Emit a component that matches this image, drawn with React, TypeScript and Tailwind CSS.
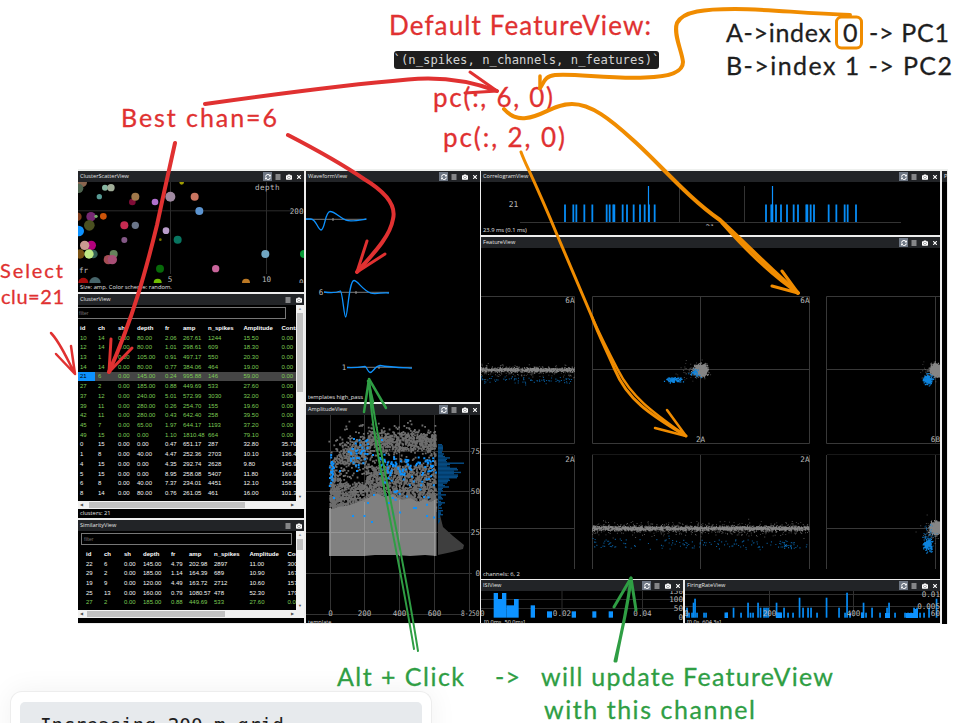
import React from "react";
import { FaSyncAlt, FaCamera, FaTimes } from "react-icons/fa";

const BLUE = "#0d92ff";
const MONO = '"DejaVu Sans Mono", monospace';

function makeRandom(seed: number) {
  let s = seed;
  return () => {
    s = (s * 16807) % 2147483647;
    return s / 2147483647;
  };
}

function dots(list: number[][], size: number) {
  return list
    .map(([x, y]) => `M${(x - size / 2).toFixed(1)} ${(y - size / 2).toFixed(1)}h${size}v${size}h-${size}z`)
    .join("");
}

// Gaussian-like cloud around a centre
function cloud(seed: number, n: number, cx: number, cy: number, sx: number, sy: number) {
  const r = makeRandom(seed);
  const g = () => r() + r() + r() + r() - 2;
  return Array.from({ length: n }, () => [cx + g() * sx, cy + g() * sy]);
}

// Horizontal band of points
function band(seed: number, n: number, x0: number, x1: number, cy: number, sy: number) {
  const r = makeRandom(seed);
  return Array.from({ length: n }, () => [x0 + r() * (x1 - x0), cy + (r() + r() + r() + r() - 2) * sy]);
}

function MenuIcon() {
  return (
    <svg width="6" height="6" viewBox="0 0 6 6" stroke="#fff" strokeWidth="0.9">
      <path d="M0.500 1H5.500M0.500 3H5.500M0.500 5H5.500" />
    </svg>
  );
}

function Bar({ title, full = true, icons = true }: { title: string; full?: boolean; icons?: boolean }) {
  return (
    <div className="flex h-[11px] shrink-0 items-center justify-between overflow-hidden bg-[#222427] pl-[2px] text-white">
      <span className="whitespace-nowrap pt-px text-[5.6px] leading-none text-[#e4e4e4]">{title}</span>
      {icons && (
        <div className="flex items-center">
          {full && (
            <span className="flex h-[9px] w-[9px] items-center justify-center bg-[#6d7683]">
              <FaSyncAlt size={6} />
            </span>
          )}
          <span className="flex w-[12px] justify-center">
            <MenuIcon />
          </span>
          <span className="flex w-[10px] justify-center">
            <FaCamera size={6} />
          </span>
          {full && (
            <span className="flex w-[10px] justify-center">
              <FaTimes size={6} />
            </span>
          )}
        </div>
      )}
    </div>
  );
}

function Plot({ x, y, w, h, children }: { x: number; y: number; w: number; h: number; children: React.ReactNode }) {
  return (
    <svg className="block shrink-0 bg-black" width={w} height={h} viewBox={`${x} ${y} ${w} ${h}`}>
      {children}
    </svg>
  );
}

function Label({ x, y, anchor = "middle", size = 7.6, children }: { x: number; y: number; anchor?: "start" | "middle" | "end"; size?: number; children: string }) {
  return (
    <text x={x} y={y} textAnchor={anchor} fontSize={size} fontFamily={MONO} fill="#b9b9b9">
      {children}
    </text>
  );
}

const circles: [number, number, number, string][] = [
  [36, 52, 15, "#8a6650"], [26, 70, 14, "#4f6550"], [105, 68, 9, "#86b5a0"], [123, 68, 11, "#a1ad98"], [88, 95, 8, "#579a94"],
  [187, 111, 10, "#800c37"], [196, 95, 12, "#a0784a"], [255, 111, 10, "#b070cc"], [301, 95, 15, "#a08aa2"],
  [335, 52, 7, "#a09c00"], [374, 95, 12, "#c97560"], [388, 138, 12, "#5c94d0"], [22, 155, 13, "#7e3c1c"],
  [63, 155, 14, "#752873"], [78, 154, 5, "#77b36a"], [100, 154, 10, "#cc5409"], [58, 181, 16, "#4a5020"],
  [26, 198, 16, "#0d92ff"], [163, 181, 12, "#c72b51"], [196, 181, 11, "#6a7588"], [288, 197, 10, "#b99dca"],
  [163, 225, 9, "#845886"], [271, 224, 4, "#7c7a00"], [323, 224, 12, "#087560"], [64, 241, 14, "#b3007c"],
  [44, 241, 14, "#ca9a91"], [30, 267, 14, "#765012"], [70, 267, 13, "#356056"], [57, 267, 14, "#bee885"],
  [131, 267, 12, "#65825b"], [115, 284, 14, "#a44d53"], [127, 284, 14, "#a84e76"], [586, 267, 12, "#71a6c2"],
  [702, 267, 12, "#079b36"], [270, 311, 12, "#076909"], [437, 311, 11, "#c9659b"], [40, 353, 15, "#a40c0c"],
  [75, 353, 17, "#47656a"], [263, 353, 12, "#70be00"], [528, 353, 12, "#bb7824"],
];

function ClusterScatter() {
  return (
    <Plot x={78} y={182} w={226} h={101}>
      <path d="M170.500 182V274M266.500 182V274M78 210.800H292" stroke="#2c2c2c" />
      {circles.map(([x, y, r, c], i) => (
        <circle key={i} cx={x / 3 + 70} cy={y / 3 + 165} r={r / 3} fill={c} />
      ))}
      <text x="255" y="189.500" textLength="24.500" fontSize="7.600" fontFamily={MONO} fill="#b9b9b9">depth</text>
      <Label x={303.5} y={213.5} anchor="end">200</Label>
      <Label x={79} y={273} anchor="start">fr</Label>
      <Label x={170} y={281.5}>5</Label>
      <Label x={266.5} y={281.5}>10</Label>
      <Label x={303.5} y={285} anchor="end">0</Label>
    </Plot>
  );
}

const headers = ["id", "ch", "sh", "depth", "fr", "amp", "n_spikes", "Amplitude", "Conta"];
const clusterRows = [
  "10 14 0.00 80.00 2.06 267.61 1244 15.50 0.00", "12 14 0.00 80.00 1.01 298.61 609 18.30 0.00",
  "13 1 0.00 105.00 0.91 497.17 550 20.30 0.00", "14 14 0.00 80.00 0.77 384.06 464 19.00 0.00",
  "21 6 0.00 145.00 0.24 995.88 146 59.00 0.00", "27 2 0.00 185.00 0.88 449.69 533 27.60 0.00",
  "37 12 0.00 240.00 5.01 572.99 3030 32.00 0.00", "39 11 0.00 280.00 0.26 254.70 155 19.60 0.00",
  "42 11 0.00 280.00 0.43 642.40 258 39.50 0.00", "45 7 0.00 65.00 1.97 644.17 1193 37.20 0.00",
  "49 15 0.00 0.00 1.10 1810.48 664 79.10 0.00", "0 15 0.00 0.00 0.47 651.17 287 32.80 35.70",
  "1 8 0.00 40.00 4.47 252.36 2703 10.10 136.40", "4 15 0.00 0.00 4.35 292.74 2628 9.80 145.90",
  "5 15 0.00 0.00 8.95 258.08 5407 11.80 169.90", "6 8 0.00 40.00 7.37 234.01 4451 12.10 158.50",
  "8 14 0.00 80.00 0.76 261.05 461 16.00 101.30",
].map((r) => r.split(" "));
const similarRows = [
  "22 6 0.00 145.00 4.79 202.98 2897 11.00 300.00", "29 2 0.00 185.00 1.14 164.39 689 10.90 167.00",
  "19 9 0.00 120.00 4.49 163.72 2712 10.60 157.00", "25 13 0.00 160.00 0.79 1080.57 478 52.30 179.00",
  "27 2 0.00 185.00 0.88 449.69 533 27.60 0.00",
].map((r) => r.split(" "));

const GRID = "grid grid-cols-[20px_20px_19px_28px_18px_25px_35.5px_38px_40px] items-center";

function Row({ cells, tone, active = false }: { cells: string[]; tone: string; active?: boolean }) {
  return (
    <div className={`${GRID} h-[9.72px] ${tone} ${active ? "bg-[#454545]" : ""}`}>
      {cells.map((c, i) => (
        <span key={i} className={`flex h-full items-center whitespace-nowrap ${i === 0 ? "mr-[3px] pl-[2px]" : ""} ${active && i === 0 ? "bg-[#0d92ff] text-black" : ""}`}>
          {c}
        </span>
      ))}
    </div>
  );
}

function VScroll({ thumb }: { thumb: string }) {
  return (
    <div className="flex w-[8px] shrink-0 flex-col items-center justify-between bg-[#f1f1f1]">
      <div className="flex flex-col items-center">
        <span className="flex h-[8px] items-center text-[4px] text-[#999]">▲</span>
        <div className={`w-[6px] bg-[#c1c1c1] ${thumb}`} />
      </div>
      <span className="flex h-[8px] items-center text-[4px] text-[#505050]">▼</span>
    </div>
  );
}

function HScroll({ thumb }: { thumb: string }) {
  return (
    <div className="flex h-[8px] shrink-0 bg-[#f1f1f1]">
      <div className="flex w-[218px] items-center justify-between px-[2px]">
        <div className="flex items-center">
          <span className="flex w-[7px] text-[4px] leading-none text-[#505050]">◀</span>
          <div className={`h-[6px] bg-[#c1c1c1] ${thumb}`} />
        </div>
        <span className="text-[4px] leading-none text-[#505050]">▶</span>
      </div>
    </div>
  );
}

function Status({ children, h = "h-[9px]" }: { children?: string; h?: string }) {
  return <div className={`flex shrink-0 items-center overflow-hidden whitespace-nowrap bg-black pl-[2px] text-[5.8px] leading-none text-[#e2e2e2] ${h}`}>{children}</div>;
}

function TableView() {
  return (
    <div className="flex h-[224px] shrink-0 flex-col bg-black">
      <Bar title="ClusterView" full={false} />
      <div className="flex h-[196px]">
        <div className="w-[218px] overflow-hidden font-['Liberation_Sans',Arial,sans-serif] text-[6px] leading-none">
          <div className="mt-[2px] flex h-[12px] w-[208px] items-center border border-l-0 border-[#777] pl-px text-[5px] text-[#757575]">filter</div>
          <div className="mt-[4px] font-bold"><Row cells={headers} tone="text-white" /></div>
          {clusterRows.map((r, i) => (
            <Row key={i} cells={r} tone={i < 11 ? "text-[#7dcb54]" : "text-[#f4f4f4]"} active={r[0] === "21"} />
          ))}
        </div>
        <VScroll thumb="h-[79px]" />
      </div>
      <HScroll thumb="w-[156px] ml-[2px]" />
      <Status>clusters: 21</Status>
    </div>
  );
}

function SimilarityTable() {
  return (
    <div className="flex h-[103px] shrink-0 flex-col bg-black">
      <Bar title="SimilarityView" full={false} />
      <div className="flex h-[79px]">
        <div className="w-[218px] overflow-hidden font-['Liberation_Sans',Arial,sans-serif] text-[6px] leading-none">
          <div className="ml-[3px] mt-[2px] flex h-[12px] w-[211px] items-center border border-[#777] pl-[2px] text-[5px] text-[#757575]">filter</div>
          <div className="ml-[6px] mt-[4px] font-bold"><Row cells={headers} tone="text-white" /></div>
          <div className="ml-[6px]">
            {similarRows.map((r, i) => (
              <Row key={i} cells={r} tone={i < 4 ? "text-[#f4f4f4]" : "text-[#7dcb54]"} />
            ))}
          </div>
        </div>
        <VScroll thumb="h-[11px]" />
      </div>
      <HScroll thumb="w-[138px]" />
      <Status h="h-[5px]" />
    </div>
  );
}

function Waveforms() {
  return (
    <Plot x={306} y={182} w={174} h={211}>
      <path d="M306 219.300H366M324 292.300H389M347 367.300H412" stroke="#777" />
      <path d="M333 218v3M356 291v3M379 366v3" stroke="#999" />
      <g fill="none" stroke={BLUE} strokeWidth="1.300" strokeLinejoin="round">
        <path d="M306 219H311C316 219 318 230 321 230C325 230 325 211.500 330 211.500C335 211.500 340 218 346 220.200C351 222 360 220 366.500 219" />
        <path d="M324 292C331 293 338 292 340.500 291C342.500 292 344 317 345.700 317C347.500 317 349 280.500 354 280.500C358 280.500 362 290 371 293.200C377 294.500 383 292 389 293" />
        <path d="M347 367.500C354 368 361 367 365 366.300C367 367 368 372.500 370 372.500C373 372.500 375 366 380 365.500C389 367 400 367.500 412 368.200" />
      </g>
      <Label x={321} y={295}>6</Label>
      <Label x={344} y={370}>1</Label>
    </Plot>
  );
}

// Points thin out towards the top and leave dark pockets between the two drifting bands
const ampGray = (() => {
  const r = makeRandom(4127);
  const out: number[][] = [];
  for (let i = 0; i < 3300; i++) {
    const x = 330 + r() * 106;
    const top = x < 366 ? 462 - (x - 330) * 0.85 : 432 + r() * 8;
    const y = top + Math.pow(r(), 0.75) * (512 - top);
    const hole = x < 366 ? y > 464 && y < 484 && x > 336 : x < 434 && y > 451 && y < 466;
    if (hole && r() < 0.8) continue;
    out.push([x, y]);
  }
  return out.concat(band(91, 420, 368, 436, 440, 9), cloud(17, 150, 352, 449, 15, 12), band(62, 260, 330, 437, 500, 8), band(63, 30, 345, 436, 428, 5));
})();
const ampBlue = band(32, 75, 380, 436, 466, 9).concat(cloud(8, 34, 361, 454, 10, 13), cloud(51, 24, 332, 473, 2, 15), band(19, 34, 385, 436, 488, 18), [
  [340, 471], [353, 516], [364.5, 516], [372, 522], [427, 516], [414, 508], [416, 508], [374, 495], [368, 503], [334, 498], [357, 471], [373, 455], [382, 440],
]);
const ampHist = [4, 5, 5, 5, 5, 4, 4, 6, 5, 7, 12, 9, 8, 9, 26, 12, 9, 12, 19, 20, 16, 23, 16, 20, 20, 19, 11, 12, 10, 9, 5, 7, 11, 5, 4, 5, 3, 3, 8, 3, 4, 5, 1, 3, 7, 4, 3, 1, 4, 0, 5, 3, 3, 5, 2, 2, 0, 2, 2, 1];

function Amplitudes() {
  return (
    <Plot x={306} y={415} w={174} h={208}>
      <path d="M330.500 415V610M364.500 415V610M399.500 415V610M434.500 415V610M469.500 415V610M306 451.500H472M306 491.500H472M306 532.500H472M306 573.500H472M306 614.500H462" stroke="#333" />
      <path d={dots(ampGray, 1.8)} fill="#7f7f7f" opacity="0.85" />
      <path d="M329 508L333 509L338 507L350 505L364 500L370 497L376 493L385 497L392 494L402 500L410 498L418 502L424 499L430 502L436.500 499V556L425 555L410 556L395 555L375 555L364 556L329 556Z" fill="#808080" />
      <path d="M330.500 508V556M364.500 502V556M399.500 500V556M434.500 500V556M329 532.500H436" stroke="#979797" />
      <path d={dots(ampBlue, 2)} fill={BLUE} />
      <path d="M438 506L440 515L443 527L453 536L464 545L463 549L452 552L438 555Z" fill="#3e3e3e" />
      {ampHist.map((w, i) => (
        <rect key={i} x="438" y={444 + i * 1.32} width={w} height="1.45" fill="#064b83" />
      ))}
      <Label x={480} y={453.5} anchor="end">75</Label>
      <Label x={480} y={494} anchor="end">50</Label>
      <Label x={480} y={535} anchor="end">25</Label>
      <Label x={480} y={576} anchor="end">0</Label>
      <Label x={330.5} y={616}>0</Label>
      <Label x={364.5} y={616}>200</Label>
      <Label x={399.5} y={616}>400</Label>
      <Label x={434.5} y={616}>600</Label>
      <text x="461" y="616" textLength="18.500" lengthAdjust="spacingAndGlyphs" fontSize="7.600" fontFamily={MONO} fill="#b9b9b9">8-250</text>
      <text x="308" y="624" fontSize="5.600" fill="#ddd">template</text>
    </Plot>
  );
}

const corrLeft = [261, 286, 295, 319, 343, 386, 395, 406, 409, 434, 447, 467, 486, 500, 513, 530].map((v) => v / 3 + 478);
const corrRight = [138, 154, 157, 168, 183, 201, 221, 234, 259, 262, 272, 282, 326, 349, 374, 383, 408].map((v) => v / 3 + 720);

function Correlogram() {
  return (
    <Plot x={481} y={182} w={459} h={44}>
      <path d="M520 222.500H901M679.500 186V222M744.500 186V222" stroke="#333" />
      {corrLeft.concat(corrRight).map((x, i) => (
        <rect key={i} x={x - 0.9} y="204.500" width="1.800" height="17.500" fill="#078cf5" />
      ))}
      <path d="M648.500 186V222M772.500 186V222" stroke={BLUE} strokeWidth="1.200" />
      <Label x={513.5} y={206.5} size={7.9}>21</Label>
      <Label x={710} y={229.5}>21</Label>
    </Plot>
  );
}

function Features() {
  return (
    <Plot x={481} y={248} w={459} h={322}>
      <path d="M481 296.500H574.500V443.500H481M592.500 296.500H809.500V443.500H592.500ZM700.500 296.500V443M592.500 369.500H809M940 296.500H826.500V443.500H940M935.500 296.500V443M826.500 369.500H940M574.500 455V569M592.500 455V569M700.500 455V569M809.500 455V569M826.500 455V569M935.500 455V569M481 528.500H574M826.500 528.500H940" fill="none" stroke="#383838" />
      <path d="M481 454.500H574M592 454.500H809M827 454.500H940" stroke="#181818" />
      <g fill="#858585">
        <path d={dots(band(11, 850, 481, 574.5, 370, 1.8), 1)} />
        <path d={dots(band(12, 260, 481, 574.5, 371, 5), 0.9)} opacity="0.700" />
        <path d={dots(band(13, 2100, 592.5, 809, 528.5, 1.9), 1)} />
        <path d={dots(band(14, 650, 592.5, 809, 529, 5.5), 0.9)} opacity="0.700" />
        <path d={dots(cloud(15, 900, 701, 370, 5.5, 4.5), 1.1)} />
        <path d={dots(cloud(16, 80, 697, 372, 13, 8), 0.9)} opacity="0.600" />
        <path d={dots(cloud(18, 900, 936, 370, 4, 4.5), 1.2)} />
        <path d={dots(cloud(20, 90, 931, 373, 8, 9), 0.9)} opacity="0.600" />
        <path d={dots(cloud(21, 900, 936, 528, 4.5, 4.5), 1.2)} />
        <path d={dots(cloud(22, 90, 932, 531, 9, 9), 0.9)} opacity="0.600" />
      </g>
      <g fill="#0d84de">
        <path d={dots(band(23, 80, 481, 574, 380, 3), 1.1)} opacity="0.650" />
        <path d={dots(band(24, 70, 593, 700, 544, 6), 1.1)} opacity="0.650" />
        <path d={dots(band(33, 70, 700, 809, 544, 4), 1.1)} opacity="0.650" />
        <path d={dots(cloud(34, 20, 791, 547, 9, 2), 1.1)} opacity="0.700" />
        <path d={dots(cloud(25, 120, 674, 380, 7, 2), 1.2)} />
        <path d={dots(cloud(26, 40, 695, 373, 4, 4), 1.1)} />
        <path d={dots(cloud(27, 200, 928, 379.5, 3.5, 3.5), 1.2)} />
        <path d={dots(cloud(28, 170, 928, 545, 4, 5), 1.2)} />
        <path d={dots(cloud(29, 45, 930, 536, 5, 9), 1)} opacity="0.700" />
      </g>
      <Label x={574.5} y={302.5} anchor="end">6A</Label>
      <Label x={809.5} y={302.5} anchor="end">6A</Label>
      <Label x={700.5} y={441.5}>2A</Label>
      <Label x={940} y={441.5} anchor="end">6B</Label>
      <Label x={574.5} y={461.5} anchor="end">2A</Label>
      <Label x={809.5} y={461.5} anchor="end">2A</Label>
    </Plot>
  );
}

const isiBars = [[47, 60, 669], [60, 72, 687], [72, 85, 669], [85, 108, 706], [108, 122, 687], [158, 171, 706], [207, 222, 724], [281, 294, 724], [343, 355, 724], [392, 405, 724]];

function Isi() {
  return (
    <Plot x={481} y={591} w={202} h={32}>
      <path d="M481 599.500H683M481 608.500H683M562 591V617M642.500 591V617" stroke="#2d2d2d" />
      {isiBars.map(([a, b, t]) => (
        <rect key={a} x={a / 3 + 478} y={t / 3 + 370} width={(b - a) / 3} height={(743 - t) / 3} fill={BLUE} />
      ))}
      <Label x={480} y={616} anchor="start">0</Label>
      <Label x={562} y={616}>0.02</Label>
      <Label x={642.5} y={616}>0.04</Label>
      <Label x={683} y={593.5} anchor="end">150</Label>
      <Label x={683} y={602} anchor="end">100</Label>
      <Label x={683} y={611} anchor="end">50</Label>
      <Label x={683} y={620} anchor="end">0</Label>
      <text x="484" y="624" fontSize="5.600" fill="#ddd">[0.0ms, 50.0ms]</text>
    </Plot>
  );
}

// x position and height of each firing rate bar
const rateBars: [number, number][] = [
  [687, 10], [689, 5], [692, 5], [693.5, 15], [695, 19], [697, 5], [704, 5], [706, 5], [727, 5], [733.5, 10], [741, 5], [748, 15], [750.5, 5],
  [753, 5], [758, 15], [760.5, 10], [764, 10], [766, 10], [768, 10], [776.5, 15], [778, 5], [780, 5], [784, 10], [788, 5],
  [793, 5], [799.5, 20], [803, 10], [808, 10], [811, 10], [817, 5], [826.5, 20], [839, 10], [845, 5], [847, 25],
  [850, 5], [862, 5], [863.5, 15], [866, 5], [872, 10], [880, 5], [887, 10], [889, 15], [895, 5], [905, 5], [908, 5], [911, 5],
  [914, 10], [917, 10], [920, 5], [924, 5], [929, 10], [936.5, 19],
];

function FiringRate() {
  return (
    <Plot x={685} y={591} w={255} h={32}>
      <path d="M685 594.500H940M685 606.500H940M769.500 591V617M853.500 591V617" stroke="#303030" />
      {rateBars.map(([x, h]) => (
        <rect key={x} x={x - 0.8} y={617.7 - h} width="1.700" height={h} fill="#078cf5" />
      ))}
      <path d="M724.500 612.500H728V618H724.500ZM776 612.500H782V618H776ZM861 612.500H864V618H861ZM885 613H890V618H885ZM906 613H918V618H906ZM914 609H918V618H914Z" fill={BLUE} />
      <Label x={769.5} y={616}>200</Label>
      <Label x={853.5} y={616}>400</Label>
      <Label x={940} y={616} anchor="end">60</Label>
      <Label x={684} y={616} anchor="start">0</Label>
      <Label x={940} y={597} anchor="end">0.01</Label>
      <Label x={940} y={608.5} anchor="end">0.005</Label>
      <text x="687" y="624" fontSize="5.600" fill="#ddd">[0.0s, 604.3s]</text>
    </Plot>
  );
}

function Dashboard() {
  return (
    <div className="flex h-[455px] w-[870px] gap-[2px] border-t-[2px] border-t-[#eef0ee] bg-[#ededed] pr-px">
      <div className="flex w-[226px] flex-col gap-[2px] overflow-hidden">
        <div className="flex h-[121px] flex-col">
          <Bar title="ClusterScatterView" />
          <ClusterScatter />
          <Status>Size: amp. Color scheme: random.</Status>
        </div>
        <TableView />
        <SimilarityTable />
      </div>
      <div className="flex w-[174px] flex-col gap-[2px] overflow-hidden">
        <div className="flex h-[231px] flex-col">
          <Bar title="WaveformView" />
          <Waveforms />
          <Status>templates high_pass</Status>
        </div>
        <div className="flex flex-col">
          <Bar title="AmplitudeView" />
          <Amplitudes />
        </div>
      </div>
      <div className="-ml-px flex w-[459px] flex-col gap-[2px] overflow-hidden">
        <div className="flex h-[64px] flex-col">
          <Bar title="CorrelogramView" />
          <Correlogram />
          <Status>23.9 ms (0.1 ms)</Status>
        </div>
        <div className="flex h-[341px] flex-col bg-black">
          <Bar title="FeatureView" />
          <Features />
          <Status>channels: 6, 2</Status>
        </div>
        <div className="flex gap-[2px]">
          <div className="flex w-[202px] flex-col">
            <Bar title="ISIView" />
            <Isi />
          </div>
          <div className="flex w-[255px] flex-col">
            <Bar title="FiringRateView" />
            <FiringRate />
          </div>
        </div>
      </div>
      <div className="flex w-[5px] flex-col overflow-hidden bg-black">
        <Bar title="P" icons={false} />
      </div>
    </div>
  );
}

function Note({ x, y, w, size = 26, color, children }: { x: number; y: number; w: number; size?: number; color: string; children: string }) {
  return (
    <text x={x} y={y} textLength={w} lengthAdjust="spacing" fontSize={size} fill={color} stroke={color} strokeWidth="0.300" fontFamily='Lato, "Open Sans", sans-serif'>
      {children}
    </text>
  );
}

const RED = "#e03131";
const GREEN = "#2f9e44";
const ORANGE = "#f08c00";
const INK = "#1e1e1e";

function Annotations() {
  return (
    <svg className="absolute left-0 top-0 h-[723px] w-[971px]" viewBox="0 0 971 723" fill="none" strokeLinecap="round" strokeLinejoin="round">
      <Note x={389} y={35} w={262} color={RED}>Default FeatureView:</Note>
      <Note x={433} y={107} w={120} color={RED}>pc(:, 6, 0)</Note>
      <Note x={443} y={147} w={122} color={RED}>pc(:, 2, 0)</Note>
      <Note x={121} y={127} w={156} size={25} color={RED}>Best chan=6</Note>
      <Note x={0} y={278} w={63} size={20} color={RED}>Select</Note>
      <Note x={1} y={304} w={63} size={20} color={RED}>clu=21</Note>
      <Note x={726} y={42} w={105} size={25} color={INK}>{"A->index"}</Note>
      <Note x={843} y={42} w={16} size={25} color={INK}>0</Note>
      <Note x={869} y={42} w={80} size={25} color={INK}>{"-> PC1"}</Note>
      <Note x={726} y={75} w={226} size={25} color={INK}>{"B->index 1 -> PC2"}</Note>
      <Note x={337} y={686} w={127} size={25} color={GREEN}>Alt + Click</Note>
      <Note x={495} y={686} w={25} size={25} color={GREEN}>{"->"}</Note>
      <Note x={541} y={686} w={292} size={25} color={GREEN}>will update FeatureView</Note>
      <Note x={544} y={719} w={211} size={25} color={GREEN}>with this channel</Note>

      <g stroke={RED} strokeWidth="3">
        <path d="M205 104C290 92 355 84 408 79.500C445 76 473 82 497 91" strokeWidth="4" />
        <path d="M470 72L497 91L465 93" />
        <path d="M175 143C170 165 163 197 157 225C146 270 133 318 109 372" strokeWidth="4" />
        <path d="M111 339L109 372L132 348" />
        <path d="M288 135C315 149 345 166 364 179C389 194 396 207 393 219C390 237 373 254 357 272" strokeWidth="4" />
        <path d="M367 241L357 272L385 254" />
        <path d="M51 333C60 342 67 359 75 374M56 354L75 374L71 346" strokeWidth="2.500" />
      </g>
      <g stroke={GREEN} strokeWidth="2">
        <path d="M369 379C371 440 393 523 414 649M369 379C376 440 399 530 418 651" />
        <path d="M369 379L364 412M369 379L386 408M368 381L373 402" strokeWidth="2.500" />
        <path d="M631 579C627 608 622 632 615 661M631 578C628 608 621 632 616 661" strokeWidth="3" />
        <path d="M614 607L631 578L636 610" strokeWidth="3" />
      </g>
      <g stroke={ORANGE} strokeWidth="3.500">
        <path d="M850 15C800 13 765 9 735 9C705 9 683 11 677 23C673 34 682 51 683 62C683 73 668 77 645 77.500C609 79 573 73 555 75C545 76 544 82 540 88" strokeWidth="4" />
        <path d="M540 76L540 88" />
        <rect x="836.500" y="17" width="25" height="31" rx="5" strokeWidth="3" />
        <path d="M504 109C511 117 518 119 526 118C542 117 553 104 572 104C591 104 610 119 633 140C660 164 687 197 720 220C745 243 770 269 798 293" strokeWidth="4" />
        <path d="M722 223C744 248 771 275 798 293M782 271L798 293L772 286" strokeWidth="3" />
        <path d="M521 152C526 166 530 170 558 237L592 317C598 334 607 351 615 370C627 399 649 414 686 436" strokeWidth="3" />
        <path d="M592 317C600 335 609 353 618 370C632 398 654 413 686 436M667 410L686 436L655 428" strokeWidth="2.500" />
      </g>
    </svg>
  );
}

export default function App() {
  return (
    <main className="relative flex h-[723px] w-[971px] flex-col overflow-hidden bg-white font-['Open_Sans','Noto_Sans',sans-serif]">
      <div className="ml-[394px] mt-[51px] flex h-[18px] w-[265px] shrink-0 items-center justify-center rounded-[3px] bg-[#1e1e1e]">
        <code className="whitespace-pre font-['DejaVu_Sans_Mono',monospace] text-[12.2px] leading-none tracking-[0.05px] text-[#d4d4d4]">{"`(n_spikes, n_channels, n_features)`"}</code>
      </div>
      <div className="ml-[78px] mt-[100px] shrink-0">
        <Dashboard />
      </div>
      <div className="ml-[10px] mt-[67px] w-[422px] shrink-0 rounded-t-[12px] border border-b-0 border-[#ededed] bg-white px-[9px] pt-[10px] shadow-[0_0_28px_rgba(0,0,0,0.06)]">
        <div className="h-[40px] overflow-hidden rounded-t-[5px] bg-[#e7eaed] pl-[20px] pt-[10px] text-[#1e1e1e]">
          <span className="whitespace-pre font-['DejaVu_Sans_Mono',monospace] text-[19.3px]">Increasing 200 m grid</span>
        </div>
      </div>
      <Annotations />
    </main>
  );
}
